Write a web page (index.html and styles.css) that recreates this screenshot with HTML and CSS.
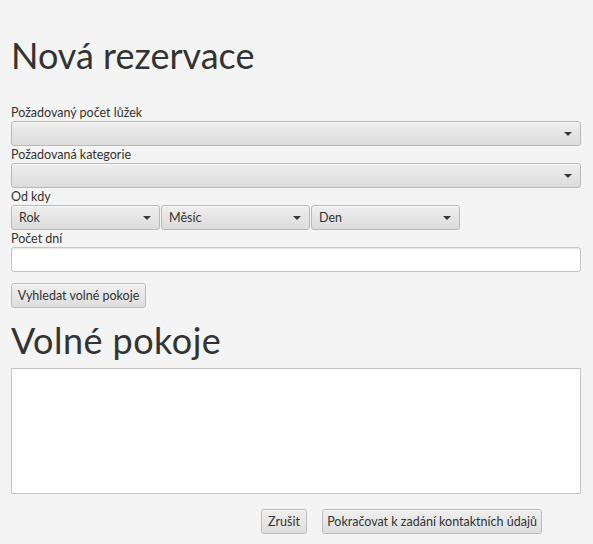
FILE: index.html
```html
<!DOCTYPE html>
<html lang="cs">
<head>
<meta charset="utf-8">
<title>Nová rezervace</title>
<link rel="stylesheet" href="styles.css">
</head>
<body>
<div class="page">
  <h1 class="title">Nová rezervace</h1>
  <div class="field-label">Požadovaný počet lůžek</div>
  <div class="combo full"><span class="combo-text"></span><span class="arrow"></span></div>
  <div class="field-label">Požadovaná kategorie</div>
  <div class="combo full"><span class="combo-text"></span><span class="arrow"></span></div>
  <div class="field-label">Od kdy</div>
  <div class="date-row">
    <div class="combo date"><span class="combo-text">Rok</span><span class="arrow"></span></div>
    <div class="combo date"><span class="combo-text">Měsíc</span><span class="arrow"></span></div>
    <div class="combo date"><span class="combo-text">Den</span><span class="arrow"></span></div>
  </div>
  <div class="field-label">Počet dní</div>
  <div class="text-field"></div>
  <div class="search-row"><button class="btn search-btn">Vyhledat volné pokoje</button></div>
  <h2 class="title title2">Volné pokoje</h2>
  <div class="text-area"></div>
  <div class="actions">
    <button class="btn cancel-btn">Zrušit</button>
    <button class="btn next-btn">Pokračovat k zadání kontaktních údajů</button>
  </div>
</div>
</body>
</html>
```

FILE: styles.css
```css
html, body {
  margin: 0;
  padding: 0;
  background: #f4f4f4;
}
body {
  font-family: Lato, "Open Sans", sans-serif;
  color: #333333;
  width: 593px;
  height: 544px;
  overflow: hidden;
}
.page {
  display: flex;
  flex-direction: column;
  padding: 0 12px 0 11px;
}
.title {
  margin: 0;
  font-weight: 400;
  font-size: 36px;
  line-height: 44px;
  color: #333333;
  padding-top: 33px;
  height: 104px;
  box-sizing: border-box;
  flex: none;
}
.title2 {
  padding-top: 10px;
  height: 60px;
  letter-spacing: 0.45px;
}
.field-label {
  font-size: 12.5px;
  height: 17px;
  line-height: 17px;
  white-space: nowrap;
  flex: none;
}
.combo {
  box-sizing: border-box;
  height: 25px;
  border: 1px solid #b9b9b9;
  border-radius: 3px;
  background: linear-gradient(#eeeeee, #dcdcdc);
  box-shadow: inset 0 1px 0 #f9f9f9;
  display: flex;
  align-items: center;
  padding: 0 8px 0 7px;
  font-size: 12.5px;
  flex: none;
}
.combo-text {
  flex: 1;
  white-space: nowrap;
}
.arrow {
  width: 0;
  height: 0;
  border-left: 4px solid transparent;
  border-right: 4px solid transparent;
  border-top: 4px solid #3a3a3a;
}
.full {
  width: 570px;
}
.date-row {
  display: flex;
  gap: 1px;
  flex: none;
}
.date {
  width: 149px;
}
.text-field {
  box-sizing: border-box;
  width: 570px;
  height: 25px;
  background: #ffffff;
  border: 1px solid #c4c4c4;
  border-radius: 3px;
  box-shadow: inset 0 1px 1px #e6e6e6;
  flex: none;
}
.search-row {
  display: flex;
  padding-top: 11px;
  flex: none;
}
.btn {
  box-sizing: border-box;
  height: 25px;
  border: 1px solid #bcbcbc;
  border-radius: 3px;
  background: linear-gradient(#efefef, #dedede);
  box-shadow: inset 0 1px 0 #fafafa;
  font-family: Lato, "Open Sans", sans-serif;
  font-size: 12.5px;
  color: #333333;
  padding: 0;
  white-space: nowrap;
}
.search-btn {
  width: 135px;
}
.text-area {
  box-sizing: border-box;
  width: 570px;
  height: 126px;
  background: #ffffff;
  border: 1px solid #c4c4c4;
  flex: none;
}
.actions {
  display: flex;
  gap: 15px;
  padding-top: 15px;
  padding-left: 250px;
  flex: none;
}
.cancel-btn {
  width: 46px;
}
.next-btn {
  width: 220px;
}
```
